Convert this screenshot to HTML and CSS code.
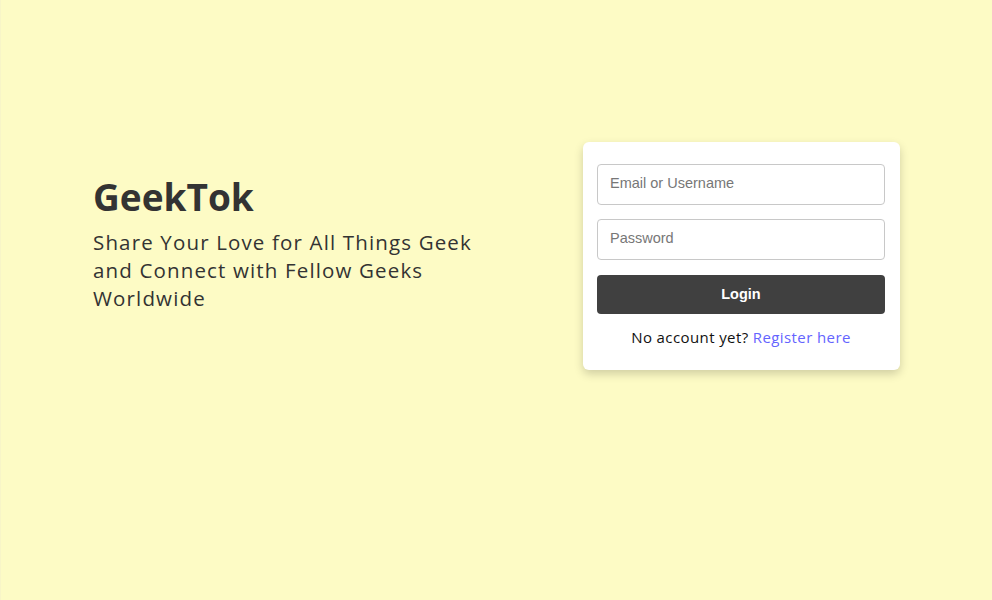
FILE: index.html
```html
<!DOCTYPE html>
<html lang="en">
<head>
<meta charset="utf-8">
<title>GeekTok</title>
<link rel="stylesheet" href="styles.css">
</head>
<body>
<main class="page">
  <section class="intro">
    <h1 class="brand">GeekTok</h1>
    <p class="tagline">Share Your Love for All Things Geek and Connect with Fellow Geeks Worldwide</p>
  </section>
  <section class="card">
    <form class="login-form">
      <input class="field" type="text" placeholder="Email or Username">
      <input class="field" type="password" placeholder="Password">
      <button class="btn" type="button">Login</button>
    </form>
    <p class="register">No account yet? <a class="link" href="#">Register here</a></p>
  </section>
</main>
</body>
</html>
```

FILE: styles.css
```css
html, body {
  margin: 0;
  padding: 0;
  height: 100%;
}
body {
  background: #fdfbc5;
  font-family: "Open Sans", "Noto Sans", sans-serif;
  color: #333;
  border-left: 1px solid #f8f5c8;
  box-sizing: border-box;
}
.page {
  display: flex;
  justify-content: space-between;
  align-items: flex-start;
  padding: 142px 92px 0 92px;
}
.intro {
  width: 400px;
  padding-top: 30px;
}
.brand {
  margin: 0;
  font-size: 37px;
  line-height: 50px;
  font-weight: 700;
  color: #333;
  letter-spacing: 0;
}
.tagline {
  margin: 6px 0 0;
  font-size: 20.5px;
  line-height: 28px;
  font-weight: 500;
  color: #333;
  letter-spacing: 1.15px;
}
.card {
  width: 317px;
  box-sizing: border-box;
  background: #fff;
  border-radius: 6px;
  padding: 22px 15px 23px 14px;
  box-shadow: 0 4px 10px rgba(0, 0, 0, 0.18);
}
.login-form {
  display: flex;
  flex-direction: column;
}
.field {
  height: 41px;
  box-sizing: border-box;
  border: 1px solid #c8c8c8;
  border-radius: 4px;
  padding: 0 12px 3px;
  font-family: "Liberation Sans", Arial, sans-serif;
  font-size: 14.5px;
  color: #333;
  margin-bottom: 14px;
  outline: none;
}
.field::placeholder {
  color: #777;
}
.btn {
  height: 39px;
  margin-top: 1px;
  padding-bottom: 3px;
  border: none;
  border-radius: 4px;
  background: #404040;
  color: #fff;
  font-family: "Liberation Sans", Arial, sans-serif;
  font-weight: 700;
  font-size: 14.5px;
}
.register {
  margin: 13px 0 0;
  text-align: center;
  font-size: 15px;
  line-height: 20px;
  color: #111;
  letter-spacing: 0.4px;
}
.link {
  color: #6464ff;
  text-decoration: none;
}
```
